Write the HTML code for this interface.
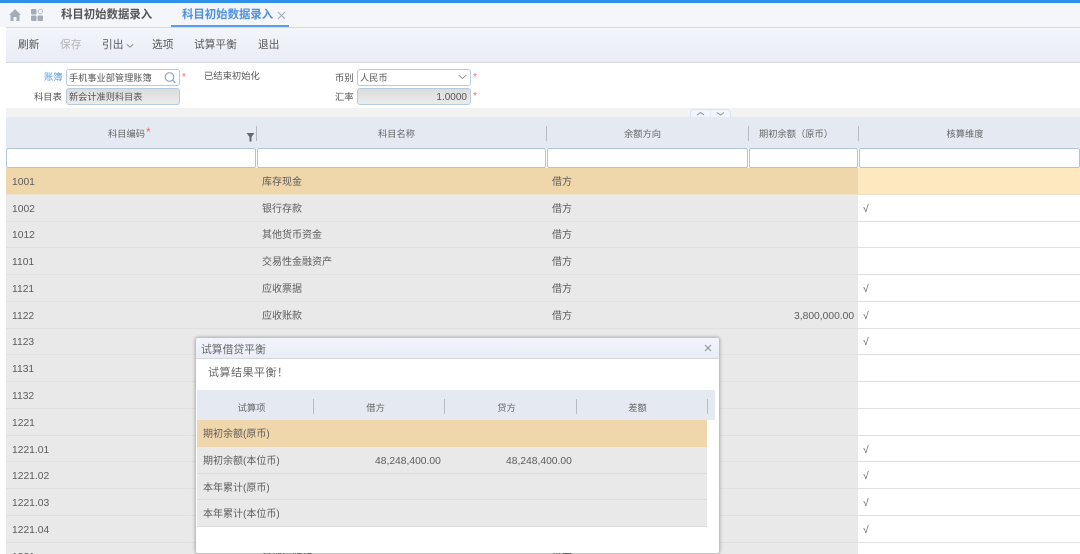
<!DOCTYPE html>
<html><head><meta charset="utf-8">
<style>
*{box-sizing:border-box}
html,body{margin:0;padding:0;background:#fff}
body{width:1080px;height:554px;overflow:hidden;position:relative;font-family:"Liberation Sans","Noto Sans CJK SC",sans-serif;color:#555;font-size:10px}
#w{position:absolute;left:0;top:0;width:1080px;height:554px;overflow:hidden;filter:blur(.35px)}
.a{position:absolute;white-space:nowrap}
.r{position:absolute;left:6px;width:1074px;height:27px;border-bottom:1px solid #e0e0e0;background:#fff}
.r.s{height:26px}
.r.s.u span{top:-1px}
.r i{position:absolute;left:0;top:0;width:852px;height:100%;background:#e9e9e9}
.r span{position:absolute;top:0;line-height:30px;white-space:nowrap;color:#5c5c5c;font-size:10.3px}
.r span.z{font-size:10px}
.h{position:absolute;top:117px;height:31px;line-height:35px;text-align:center;color:#666;font-size:9.25px}
.sep{position:absolute;width:1px;background:#b9bcc2}
.f{position:absolute;top:148px;height:20px;background:#fff;border:1px solid #aec6dc;border-radius:2px}
.tb{position:absolute;top:38px;font-size:10.7px;line-height:14px;color:#555;white-space:nowrap}
.lb{position:absolute;font-size:9.3px;line-height:12px;color:#555;white-space:nowrap}
.in{position:absolute;height:17px;border:1px solid #b7cbe0;border-radius:3px;font-size:9.2px;line-height:17px;padding-left:2px;white-space:nowrap;color:#555}
.st{position:absolute;color:#f26a6a;font-size:10px;line-height:10px}
.dr{position:absolute;left:1px;width:510px;height:27px;background:#e9e9e9;border-bottom:1px solid #dcdcdc;line-height:30px;font-size:10px;color:#5c5c5c}
.dr span{position:absolute;white-space:nowrap}
.dh{position:absolute;top:63px;text-align:center;line-height:14px;font-size:9.3px;color:#666;white-space:nowrap}
</style></head><body><div id="w">
<div class="a" style="left:0;top:0;width:1080px;height:3px;background:#2f90ea"></div>
<div class="a" style="left:0;top:3px;width:1080px;height:24px;background:#f4f6fa"></div>
<svg class="a" style="left:8px;top:8px" width="36" height="15" viewBox="0 0 36 15">
<path d="M1 7 L7 1 L13 7 L11.500 7 L11.500 13 L8.500 13 L8.500 9 L5.500 9 L5.500 13 L2.500 13 L2.500 7Z" fill="#a3adb9"/>
<rect x="23" y="1" width="5.500" height="5.500" rx="1" fill="#a3adb9"/><rect x="23" y="7.500" width="5.500" height="5.500" rx="1" fill="#a3adb9"/><rect x="29.500" y="7.500" width="5.500" height="5.500" rx="1" fill="#a3adb9"/>
<circle cx="32.300" cy="3.500" r="2.200" fill="none" stroke="#b5bdc7" stroke-width="1"/>
</svg>
<div class="a" style="left:61px;top:8px;font-size:11.400px;line-height:15px;color:#555;font-weight:bold">科目初始数据录入</div>
<div class="a" style="left:182px;top:8px;font-size:11.400px;line-height:15px;color:#4f8fe0;font-weight:bold">科目初始数据录入</div>
<svg class="a" style="left:277px;top:11px" width="9" height="9"><path d="M1 1L8 8M8 1L1 8" stroke="#a5adb8" stroke-width="1.100"/></svg>
<div class="a" style="left:171px;top:25px;width:118px;height:2px;background:#5b9fe8"></div>

<div class="a" style="left:6px;top:27px;width:1074px;height:36px;background:linear-gradient(#f3f5fb,#e8ecf5);border-top:1px solid #d5d9e2;border-bottom:1px solid #d5d9e2"></div>
<div class="tb" style="left:18px">刷新</div>
<div class="tb" style="left:60px;color:#b4b4b4">保存</div>
<div class="tb" style="left:102px">引出</div>
<svg class="a" style="left:126px;top:43px" width="8" height="6"><path d="M.8 1.200L4 4.200L7.200 1.200" fill="none" stroke="#8a8f96" stroke-width="1"/></svg>
<div class="tb" style="left:152px">选项</div>
<div class="tb" style="left:194px">试算平衡</div>
<div class="tb" style="left:258px">退出</div>

<div class="lb" style="left:44px;top:71px;color:#5a9ae6">账簿</div>
<div class="in" style="left:66px;top:69px;width:114px;background:#fff">手机事业部管理账簿</div>
<svg class="a" style="left:163px;top:71px" width="14" height="14"><circle cx="6.500" cy="6" r="4.300" fill="none" stroke="#8fa6b8" stroke-width="1.200"/><path d="M9.800 9.300L12.500 12" stroke="#8fa6b8" stroke-width="1.300"/></svg>
<div class="st" style="left:182px;top:73px">*</div>
<div class="lb" style="left:204px;top:70px">已结束初始化</div>
<div class="lb" style="left:34px;top:91px">科目表</div>
<div class="in" style="left:66px;top:88px;width:114px;background:linear-gradient(#dcdcdc,#ececec)">新会计准则科目表</div>

<div class="lb" style="left:335px;top:72px">币别</div>
<div class="in" style="left:357px;top:69px;width:114px;background:#fff">人民币</div>
<svg class="a" style="left:458px;top:74px" width="9" height="6"><path d="M.8 1L4.500 4.500L8.200 1" fill="none" stroke="#9a9fa6" stroke-width="1"/></svg>
<div class="st" style="left:473px;top:73px">*</div>
<div class="lb" style="left:335px;top:91px">汇率</div>
<div class="in" style="left:357px;top:88px;width:114px;background:linear-gradient(#dcdcdc,#ececec);text-align:right;padding-right:3px;font-size:10px">1.0000</div>
<div class="st" style="left:473px;top:92px">*</div>

<div class="a" style="left:6px;top:108px;width:1074px;height:9px;background:#f2f2f2"></div>
<div class="a" style="left:690px;top:109px;width:41px;height:8px;background:#f0f6fc;border:1px solid #d4e6f7;border-bottom:0;border-radius:4px 4px 0 0"></div>
<svg class="a" style="left:690px;top:110px" width="41" height="8"><path d="M7 5L10.500 2.500L14 5" fill="none" stroke="#8d949c" stroke-width="1"/><path d="M27 2.500L30.500 5L34 2.500" fill="none" stroke="#8d949c" stroke-width="1"/><path d="M20.500 0V8" stroke="#e2edf8" stroke-width="1"/></svg>

<div class="a" style="left:6px;top:117px;width:1074px;height:31px;background:#e4e9f2"></div>
<div class="h" style="left:6px;width:241px">科目编码</div>
<div class="st" style="left:146px;top:127px;font-size:12px">*</div>
<svg class="a" style="left:246px;top:132px" width="9" height="10"><path d="M0.500 1H8.500L5.500 5V9.500H3.500V5Z" fill="#5f6a75"/></svg>
<div class="h" style="left:256px;width:281px">科目名称</div>
<div class="h" style="left:547px;width:191px">余额方向</div>
<div class="h" style="left:748px;width:96px">期初余额（原币）</div>
<div class="h" style="left:858px;width:214px">核算维度</div>
<div class="sep" style="left:256px;top:126px;height:15px"></div>
<div class="sep" style="left:546px;top:126px;height:15px"></div>
<div class="sep" style="left:748px;top:126px;height:15px"></div>
<div class="sep" style="left:858px;top:126px;height:15px"></div>
<div class="f" style="left:6px;width:250px"></div>
<div class="f" style="left:257px;width:289px"></div>
<div class="f" style="left:547px;width:201px"></div>
<div class="f" style="left:749px;width:109px"></div>
<div class="f" style="left:859px;width:221px"></div>

<div class="r" style="top:168px;background:#fee8c0;border-bottom-color:#eee0c8"><i style="background:#f0d6ab"></i><span style="left:6px">1001</span><span class="z" style="left:256px">库存现金</span><span class="z" style="left:546px">借方</span></div>
<div class="r" style="top:195px"><i></i><span style="left:6px">1002</span><span class="z" style="left:256px">银行存款</span><span class="z" style="left:546px">借方</span><span style="left:857px">√</span></div>
<div class="r s u" style="top:222px"><i></i><span style="left:6px">1012</span><span class="z" style="left:256px">其他货币资金</span><span class="z" style="left:546px">借方</span></div>
<div class="r" style="top:248px"><i></i><span style="left:6px">1101</span><span class="z" style="left:256px">交易性金融资产</span><span class="z" style="left:546px">借方</span></div>
<div class="r" style="top:275px"><i></i><span style="left:6px">1121</span><span class="z" style="left:256px">应收票据</span><span class="z" style="left:546px">借方</span><span style="left:857px">√</span></div>
<div class="r" style="top:302px"><i></i><span style="left:6px">1122</span><span class="z" style="left:256px">应收账款</span><span class="z" style="left:546px">借方</span><span style="left:788px">3,800,000.00</span><span style="left:857px">√</span></div>
<div class="r s u" style="top:329px"><i></i><span style="left:6px">1123</span><span style="left:857px">√</span></div>
<div class="r" style="top:355px"><i></i><span style="left:6px">1131</span></div>
<div class="r" style="top:382px"><i></i><span style="left:6px">1132</span></div>
<div class="r" style="top:409px"><i></i><span style="left:6px">1221</span></div>
<div class="r s" style="top:436px"><i></i><span style="left:6px">1221.01</span><span style="left:857px">√</span></div>
<div class="r" style="top:462px"><i></i><span style="left:6px">1221.02</span><span style="left:857px">√</span></div>
<div class="r" style="top:489px"><i></i><span style="left:6px">1221.03</span><span style="left:857px">√</span></div>
<div class="r" style="top:516px"><i></i><span style="left:6px">1221.04</span><span style="left:857px">√</span></div>
<div class="r" style="top:543px;height:11px;border:0"><i></i><span style="left:6px">1231</span><span class="z" style="left:256px">其他应收款</span><span class="z" style="left:546px">借方</span></div>

<div class="a" style="left:196px;top:338px;width:523px;height:215px;background:#fff;border-radius:2px;box-shadow:0 0 3px 1px rgba(0,0,0,.28);overflow:hidden">
  <div class="a" style="left:0;top:0;width:523px;height:21px;background:linear-gradient(#f2f5fc,#e9edf6);border-bottom:1px solid #d4d7dd"></div>
  <div class="a" style="left:5px;top:5px;font-size:10.800px;line-height:14px;color:#666">试算借贷平衡</div>
  <svg class="a" style="left:508px;top:6px" width="8" height="8"><path d="M1 1L7 7M7 1L1 7" stroke="#8f949b" stroke-width="1.100"/></svg>
  <div class="a" style="left:12px;top:28px;font-size:11px;line-height:15px;color:#666;letter-spacing:.5px">试算结果平衡！</div>
  <div class="a" style="left:1px;top:52px;width:518px;height:30px;background:#e4e9f2"></div>
  <div class="dh" style="left:1px;width:109px">试算项</div>
  <div class="dh" style="left:118px;width:123px">借方</div>
  <div class="dh" style="left:249px;width:123px">贷方</div>
  <div class="dh" style="left:380px;width:123px">差额</div>
  <div class="sep" style="left:117px;top:61px;height:15px"></div>
  <div class="sep" style="left:248px;top:61px;height:15px"></div>
  <div class="sep" style="left:380px;top:61px;height:15px"></div>
  <div class="sep" style="left:511px;top:61px;height:15px"></div>
  <div class="dr" style="top:82px;background:#f0d6ab;border-bottom-color:#f0d6ab"><span style="left:6px">期初余额(原币)</span></div>
  <div class="dr" style="top:109px"><span style="left:6px">期初余额(本位币)</span><span style="left:178px;font-size:10.300px">48,248,400.00</span><span style="left:309px;font-size:10.300px">48,248,400.00</span></div>
  <div class="dr" style="top:136px;height:26px"><span style="left:6px">本年累计(原币)</span></div>
  <div class="dr" style="top:162px"><span style="left:6px">本年累计(本位币)</span></div>
</div>
</div></body></html>
